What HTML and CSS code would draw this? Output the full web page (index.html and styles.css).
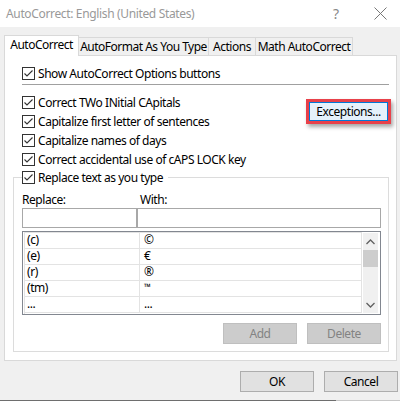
FILE: index.html
```html
<!DOCTYPE html>
<html lang="en">
<head>
<meta charset="utf-8">
<title>AutoCorrect</title>
<link rel="stylesheet" href="styles.css">
</head>
<body>
<div class="window">
  <div class="titlebar">
    <span class="title">AutoCorrect: English (United States)</span>
    <span class="help">?</span>
    <svg class="close" width="13" height="13" viewBox="0 0 13 13"><path d="M0.5 0.5 L12.5 12.5 M12.5 0.5 L0.5 12.5" stroke="#777" stroke-width="1" fill="none"/></svg>
  </div>

  <div class="tabs">
    <div class="tab active">AutoCorrect</div>
    <div class="tab t2">AutoFormat As You Type</div>
    <div class="tab t3">Actions</div>
    <div class="tab t4">Math AutoCorrect</div>
  </div>

  <div class="panel">
    <label class="row first">
      <span class="cb"><svg width="11" height="11" viewBox="0 0 11 11"><path d="M1.5 5.5 L4 8 L9.5 2.5" stroke="#333" stroke-width="1.1" fill="none"/></svg></span>
      Show AutoCorrect Options buttons
    </label>
    <div class="sep"></div>

    <div class="opts">
      <div class="opt-list">
        <label class="row"><span class="cb"><svg width="11" height="11" viewBox="0 0 11 11"><path d="M1.5 5.5 L4 8 L9.5 2.5" stroke="#333" stroke-width="1.1" fill="none"/></svg></span>Correct TWo INitial CApitals</label>
        <label class="row"><span class="cb"><svg width="11" height="11" viewBox="0 0 11 11"><path d="M1.5 5.5 L4 8 L9.5 2.5" stroke="#333" stroke-width="1.1" fill="none"/></svg></span>Capitalize first letter of sentences</label>
        <label class="row"><span class="cb"><svg width="11" height="11" viewBox="0 0 11 11"><path d="M1.5 5.5 L4 8 L9.5 2.5" stroke="#333" stroke-width="1.1" fill="none"/></svg></span>Capitalize names of days</label>
        <label class="row"><span class="cb"><svg width="11" height="11" viewBox="0 0 11 11"><path d="M1.5 5.5 L4 8 L9.5 2.5" stroke="#333" stroke-width="1.1" fill="none"/></svg></span>Correct accidental use of cAPS LOCK key</label>
      </div>
      <div class="highlight">
        <button class="btn-exc">Exceptions...</button>
      </div>
    </div>

    <div class="group">
      <label class="row legend"><span class="cb"><svg width="11" height="11" viewBox="0 0 11 11"><path d="M1.5 5.5 L4 8 L9.5 2.5" stroke="#333" stroke-width="1.1" fill="none"/></svg></span>Replace text as you type</label>
      <div class="labels">
        <span class="lbl-replace">Replace:</span>
        <span class="lbl-with">With:</span>
      </div>
      <div class="inputs">
        <div class="input in-replace"></div>
        <div class="input in-with"></div>
      </div>
      <div class="list">
        <div class="rows">
          <div class="lrow"><div class="c1">(c)</div><div class="c2">©</div></div>
          <div class="lrow"><div class="c1">(e)</div><div class="c2">€</div></div>
          <div class="lrow"><div class="c1">(r)</div><div class="c2">®</div></div>
          <div class="lrow"><div class="c1">(tm)</div><div class="c2 tm">™</div></div>
          <div class="lrow"><div class="c1">...</div><div class="c2">...</div></div>
        </div>
        <div class="scrollbar">
          <div class="arrow"><svg width="9" height="6" viewBox="0 0 9 6"><path d="M0.5 5 L4.5 1 L8.5 5" stroke="#606060" stroke-width="1.3" fill="none"/></svg></div>
          <div class="thumb"></div>
          <div class="track"></div>
          <div class="arrow"><svg width="9" height="6" viewBox="0 0 9 6"><path d="M0.5 1 L4.5 5 L8.5 1" stroke="#606060" stroke-width="1.3" fill="none"/></svg></div>
        </div>
      </div>
      <div class="group-buttons">
        <button class="btn disabled">Add</button>
        <button class="btn disabled">Delete</button>
      </div>
    </div>
  </div>

  <div class="footer">
    <button class="btn">OK</button>
    <button class="btn">Cancel</button>
  </div>
  <div class="bottom-edge"></div>
</div>
</body>
</html>
```

FILE: styles.css
```css
* { box-sizing: border-box; }
html, body {
  margin: 0;
  padding: 0;
  background: #f0f0f0;
}
body {
  font-family: "Noto Sans", "Open Sans", sans-serif;
  font-size: 12px;
  letter-spacing: -0.45px;
  color: #000;
}
.window {
  width: 400px;
  height: 401px;
  overflow: hidden;
  background: #f0f0f0;
  display: flex;
  flex-direction: column;
}
.titlebar {
  height: 27px;
  background: #fff;
  display: flex;
  align-items: center;
  padding-left: 6px;
  flex-shrink: 0;
}
.title {
  color: #999;
  font-size: 12px;
  letter-spacing: -0.35px;
  flex: 1;
}
.help {
  color: #888;
  font-size: 14px;
  margin-right: 35px;
  letter-spacing: 0;
}
.close {
  margin-right: 13px;
}
.tabs {
  margin-top: 8px;
  padding-left: 4px;
  height: 20px;
  display: flex;
  align-items: flex-end;
  flex-shrink: 0;
}
.tab {
  height: 18px;
  border: 1px solid #d9d9d9;
  border-bottom: none;
  border-left: none;
  background: #f0f0f0;
  display: flex;
  align-items: center;
  justify-content: center;
  line-height: 1;
  white-space: nowrap;
  letter-spacing: -0.5px;
}
.tab.active {
  height: 21px;
  margin-bottom: -1px;
  border-left: 1px solid #d9d9d9;
  border-right: 1px solid #d9d9d9;
  background: #fff;
  width: 75px;
  position: relative;
  z-index: 1;
  padding-bottom: 2px;
}
.t2 { width: 130px; }
.t3 { width: 47px; }
.t4 { width: 97px; }

.panel {
  margin-left: 4px;
  width: 393px;
  height: 306px;
  flex-shrink: 0;
  border: 1px solid #d9d9d9;
  background: #fff;
  padding-top: 8px;
}
.row {
  height: 19px;
  display: flex;
  align-items: center;
  white-space: nowrap;
}
.row.first {
  padding-left: 17px;
}
.cb {
  width: 13px;
  height: 13px;
  border: 1px solid #333;
  background: #fff;
  margin-right: 3px;
  display: inline-flex;
  align-items: center;
  justify-content: center;
  flex-shrink: 0;
}
.cb svg { display: block; }
.sep {
  height: 1px;
  background: #a0a0a0;
  margin: 1px 7px 0 17px;
}
.opts {
  margin-top: 8px;
  display: flex;
  padding-left: 17px;
}
.opt-list {
  flex: 1;
}
.highlight {
  margin-top: 6px;
  margin-right: 5px;
  width: 85px;
  height: 25px;
  border: 3px solid #e8414a;
  box-shadow: 2px 3px 4px rgba(0,0,0,0.35);
  align-self: flex-start;
}
.btn-exc {
  display: block;
  width: 100%;
  height: 100%;
  margin: 0;
  padding: 0;
  border: 1px solid #0078d7;
  background: #e5f1fb;
  font: inherit;
  letter-spacing: inherit;
  color: #000;
}
.group {
  margin: 8px 7px 0 8px;
  height: 175px;
  border: 1px solid #dcdcdc;
  padding: 0 6px 0 8px;
}
.legend {
  margin-top: -10px;
  background: #fff;
  width: 146px;
}
.labels {
  margin-top: 3px;
  height: 18px;
  display: flex;
  align-items: center;
}
.lbl-replace { width: 118px; }
.inputs {
  display: flex;
  height: 20px;
}
.input {
  height: 20px;
  border: 1px solid #a8a8a8;
  background: #fff;
}
.in-replace { width: 115px; }
.in-with { width: 244px; }
.list {
  margin-top: 3px;
  height: 84px;
  width: 359px;
  border: 1px solid #828790;
  padding: 0 2px 0 1px;
  display: flex;
  background: #fff;
}
.rows {
  width: 338px;
  border-top: 1px solid #e3e3e3;
  border-left: 1px solid #e3e3e3;
}
.lrow {
  height: 16px;
  display: flex;
  border-bottom: 1px solid #e3e3e3;
}
.c1, .c2 {
  border-right: 1px solid #e3e3e3;
  padding-left: 2px;
  line-height: 14px;
}
.c1 { width: 115px; }
.c2 { width: 222px; padding-left: 4px; }
.tm { font-size: 9px; line-height: 12px; }
.scrollbar {
  margin-left: 1px;
  margin-top: 1px;
  width: 16px;
  height: 80px;
  background: #f0f0f0;
  display: flex;
  flex-direction: column;
}
.arrow {
  height: 17px;
  display: flex;
  align-items: center;
  justify-content: center;
}
.thumb {
  height: 17px;
  background: #cdcdcd;
}
.track { flex: 1; }
.group-buttons {
  margin-top: 8px;
  display: flex;
  justify-content: flex-end;
  gap: 10px;
  padding-right: 1px;
}
.btn {
  width: 74px;
  height: 21px;
  margin: 0;
  padding: 0;
  border: 1px solid #adadad;
  background: #e1e1e1;
  font: inherit;
  letter-spacing: inherit;
  color: #000;
}
.btn.disabled {
  background: #cccccc;
  border-color: #bfbfbf;
  color: #838383;
}
.footer {
  margin-top: 10px;
  display: flex;
  justify-content: flex-end;
  gap: 10px;
  padding-right: 2px;
  flex-shrink: 0;
}
.bottom-edge {
  margin-top: auto;
  height: 1px;
  background: linear-gradient(to right, #6e6e6e 0, #6e6e6e 336px, #c8c8c8 336px);
  flex-shrink: 0;
}
```
